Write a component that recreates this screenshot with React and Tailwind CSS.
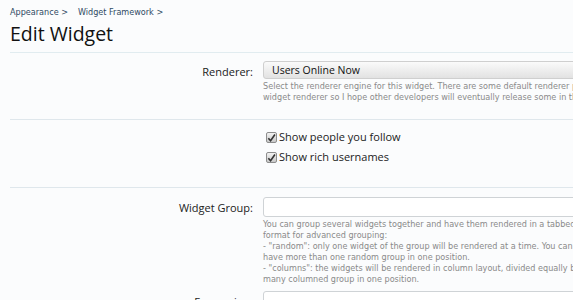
import React from "react";

const labelFont = { fontFamily: '"Open Sans", "DejaVu Sans", sans-serif' };
const smallFont = { fontFamily: '"DejaVu Sans Condensed", "DejaVu Sans", sans-serif' };

const Row = ({ label, children, className = "" }) => (
  <div className={`flex border-b border-[#dfe7ec] ${className}`}>
    <div className="w-[243px] shrink-0 text-right text-[11px] text-[#222] pt-[3px]">
      {label}
    </div>
    <div className="ml-[10px] w-[420px] shrink-0">{children}</div>
  </div>
);

const Check = ({ text }) => (
  <label className="flex items-center gap-[2px] h-[20px] text-[11px] text-[#222]">
    <span className="w-[11px] h-[11px] rounded-[2px] border border-[#8d8d8d] bg-gradient-to-b from-[#f2f2f2] to-[#c9c9c9] flex items-center justify-center">
      <svg width="10" height="10" viewBox="0 0 10 10">
        <path d="M1.5 5.2 L4 8 L8.8 1.2" fill="none" stroke="#333" strokeWidth="1.8" />
      </svg>
    </span>
    {text}
  </label>
);

const Desc = ({ lines }) => (
  <div className="text-[9px] leading-[11px] text-[#8a8a8a] whitespace-nowrap" style={smallFont}>
    {lines.map((l) => (
      <div key={l}>{l}</div>
    ))}
  </div>
);

export default function App() {
  return (
    <div className="w-[573px] h-[300px] overflow-hidden bg-[#fbfcfd]" style={labelFont}>
      <div className="pl-[10px]">
        {/* breadcrumb */}
        <div className="pt-[6px] flex gap-[10px] text-[9px] text-[#2f4a63]" style={smallFont}>
          <span>Appearance &gt;</span>
          <span>Widget Framework &gt;</span>
        </div>
        <h1 className="text-[19.5px] leading-[24px] text-[#111] mt-[2px] pb-[6px] border-b border-[#e1ecf0]">
          Edit Widget
        </h1>

        <Row label="Renderer:" className="pt-[8px] pb-[16px]">
          <div className="h-[18px] rounded-[3px] border border-[#cfcfcf] bg-gradient-to-b from-[#fafafa] to-[#e2e2e2] text-[10.5px] text-[#111] pl-[8px] leading-[16px]">
            Users Online Now
          </div>
          <div className="mt-[2px]">
            <Desc
              lines={[
                "Select the renderer engine for this widget. There are some default renderer packed with the add-on but",
                "widget renderer so I hope other developers will eventually release some in the future.",
              ]}
            />
          </div>
        </Row>

        <Row label="" className="pt-[8px] pb-[19px]">
          <div className="pl-[3px]">
            <Check text="Show people you follow" />
            <Check text="Show rich usernames" />
          </div>
        </Row>

        <Row label="Widget Group:" className="pt-[9px] border-b-0">
          <div className="h-[20px] rounded-[3px] border border-[#cfd3d6] bg-white" />
          <div className="mt-[2px]">
            <Desc
              lines={[
                "You can group several widgets together and have them rendered in a tabbed interface. Use this",
                "format for advanced grouping:",
                "- \"random\": only one widget of the group will be rendered at a time. You can not",
                "have more than one random group in one position.",
                "- \"columns\": the widgets will be rendered in column layout, divided equally between",
                "many columned group in one position.",
              ]}
            />
          </div>
        </Row>

        <Row label="Expression:" className="pt-[6px] border-b-0">
          <div className="h-[20px] rounded-[3px] border border-[#cfd3d6] bg-white" />
        </Row>
      </div>
    </div>
  );
}
